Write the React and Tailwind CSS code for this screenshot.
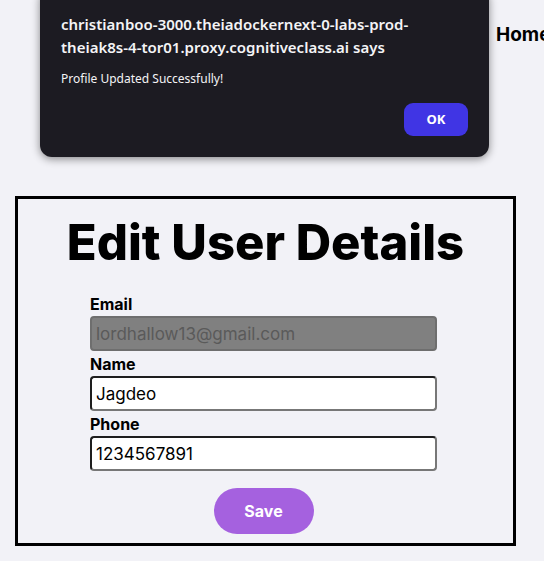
import { useState } from "react";

const poppins = { fontFamily: '"Inter", "Liberation Sans", sans-serif' };

const AlertDialog = () => {
  return (
    <div className="absolute left-[40px] top-[-12px] w-[449px] h-[169px] rounded-[12px] bg-[#1c1b22] shadow-[0_2px_8px_rgba(0,0,0,0.45)] px-[21px] pt-[25px] font-['Noto_Sans','Open_Sans',sans-serif]">
      <div className="text-[15px] leading-[23px] font-semibold text-[#f4f4f6]">
        christianboo-3000.theiadockernext-0-labs-prod-theiak8s-4-tor01.proxy.cognitiveclass.ai says
      </div>
      <div className="mt-[11px] text-[12px] leading-[18px] text-[#f4f4f6]">
        Profile Updated Successfully!
      </div>
      <div className="flex justify-end mt-[15px]">
        <button className="w-[64px] h-[33px] rounded-[9px] bg-[#4035e4] text-white text-[13px] font-bold">
          OK
        </button>
      </div>
    </div>
  );
};

const Field = ({ label, value, disabled }) => (
  <div className="flex flex-col">
    <label className="text-[16px] leading-[24px] font-bold text-black">{label}</label>
    <input
      className={
        disabled
          ? "h-[35px] w-full rounded-[4px] border-2 border-[#6e6e6e] bg-[#808080] px-[4px] text-[17px] text-[#5a5a5a]"
          : "h-[35px] w-full rounded-[4px] border-2 border-t-[#1e1e1e] border-l-[#1e1e1e] border-r-[#777777] border-b-[#777777] bg-white px-[4px] text-[17px] text-black"
      }
      defaultValue={value}
      disabled={disabled}
      style={poppins}
    />
  </div>
);

const App = () => {
  const [saved] = useState(true);

  return (
    <div className="relative w-[544px] min-h-[561px] overflow-hidden bg-[#f2f2f7]" style={poppins}>
      <header className="flex h-[70px] items-center justify-end">
        <nav className="w-[48px] overflow-hidden whitespace-nowrap text-[19px] font-bold text-black">
          Home
        </nav>
      </header>
      <div className="pt-[126px] pl-[15px]">
        <div className="w-[501px] h-[350px] border-[3px] border-black flex flex-col items-center">
          <h1 className="mt-[8px] text-[49px] leading-[72px] font-extrabold text-black">
            Edit User Details
          </h1>
          <form className="w-[347px] mr-[4px] mt-[13px] flex flex-col gap-[1px]">
            <Field label="Email" value="lordhallow13@gmail.com" disabled />
            <Field label="Name" value="Jagdeo" />
            <Field label="Phone" value="1234567891" />
            <div className="flex justify-center mt-[16px]">
              <button
                type="button"
                className="w-[100px] h-[46px] rounded-full bg-[#a561df] text-white text-[16px] font-bold"
              >
                Save
              </button>
            </div>
          </form>
        </div>
      </div>
      {saved && <AlertDialog />}
    </div>
  );
};

export default App;
